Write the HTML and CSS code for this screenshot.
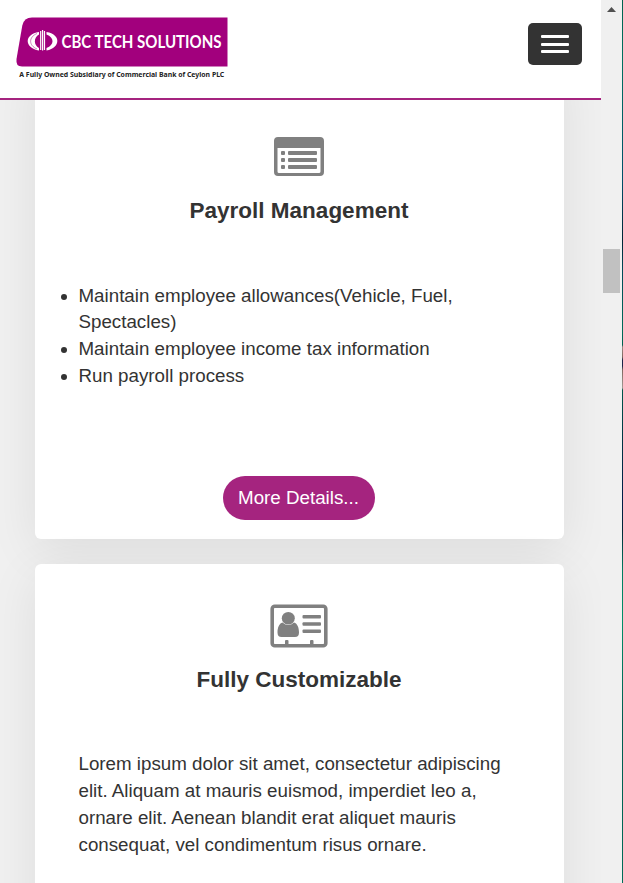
FILE: index.html
```html
<!DOCTYPE html>
<html lang="en">
<head>
<meta charset="utf-8">
<title>CBC Tech Solutions</title>
<link rel="stylesheet" href="styles.css">
</head>
<body>
<div class="window">
  <div class="page">
    <header class="header">
      <svg class="logo" width="216" height="66" viewBox="0 0 216 66">
        <path d="M16 1.500H211.500V50.500H6Q-.500 50.500 .500 43L6.300 9.500Q8 1.500 16 1.500Z" fill="#a2007d"/>
        <path d="M23 16C8 18 8 32 23 34.500V32C17.500 29 17.500 21.500 23 18.500Z" fill="#fff"/>
        <path d="M21 17.500C12.500 21 12.500 29.500 21 33" fill="none" stroke="#b94aa0" stroke-width=".7"/>
        <path d="M24.700 15V34M26.600 14V34.500M28.500 15V34" stroke="#fff" stroke-width="1.200"/>
        <path d="M30.500 16C45 18 45 32 30.500 34.500V32C38.500 29 38.500 21.500 30.500 18.500Z" fill="#fff"/>
        <text class="logo-name" x="45.500" y="32.300" textLength="160" lengthAdjust="spacingAndGlyphs">CBC TECH SOLUTIONS</text>
        <text class="logo-tag" x="3.300" y="61" textLength="205" lengthAdjust="spacingAndGlyphs">A Fully Owned Subsidiary of Commercial Bank of Ceylon PLC</text>
      </svg>
      <button class="menu" aria-label="Menu"><span></span><span></span><span></span></button>
    </header>
    <main class="cards">
      <section class="card card-first">
        <svg class="icon" width="52" height="41" viewBox="0 0 52 41">
          <path fill="#808080" fill-rule="evenodd" d="M5 1H47Q51 1 51 5V36Q51 40 47 40H5Q1 40 1 36V5Q1 1 5 1ZM4.500 12V35.500Q4.500 37 6 37H46Q47.500 37 47.500 35.500V12Z"/>
          <g fill="#808080">
            <rect x="8" y="15" width="4" height="4" rx="1"/><rect x="15" y="15" width="29" height="4" rx="1"/>
            <rect x="8" y="22" width="4" height="4" rx="1"/><rect x="15" y="22" width="29" height="4" rx="1"/>
            <rect x="8" y="29" width="4" height="4" rx="1"/><rect x="15" y="29" width="29" height="4" rx="1"/>
          </g>
        </svg>
        <h2>Payroll Management</h2>
        <ul>
          <li>Maintain employee allowances(Vehicle, Fuel, Spectacles)</li>
          <li>Maintain employee income tax information</li>
          <li>Run payroll process</li>
        </ul>
        <a class="button">More Details...</a>
      </section>
      <section class="card card-second">
        <svg class="icon" width="58" height="44" viewBox="0 0 58 44">
          <rect x="2.200" y="2.200" width="53.600" height="39.600" rx="2.500" fill="none" stroke="#808080" stroke-width="3.600"/>
          <g fill="#808080">
            <ellipse cx="18.300" cy="14.200" rx="6.500" ry="6.300"/>
            <path d="M12.500 18.500Q18.300 23.500 24 18.500C27.500 19.500 29 24 29 28.500Q29 33 25 33H11.500Q7.500 33 7.500 28.500C7.500 24 9 19.500 12.500 18.500Z"/>
            <rect x="32.500" y="11" width="18.500" height="3.500" rx="1"/>
            <rect x="32.500" y="18.300" width="18.500" height="3.500" rx="1"/>
            <rect x="32.500" y="25.500" width="18.500" height="3.500" rx="1"/>
            <rect x="15" y="36" width="3.500" height="6" rx="1"/>
            <rect x="40" y="36" width="3.500" height="6" rx="1"/>
          </g>
        </svg>
        <h2>Fully Customizable</h2>
        <p>Lorem ipsum dolor sit amet, consectetur adipiscing elit. Aliquam at mauris euismod, imperdiet leo a, ornare elit. Aenean blandit erat aliquet mauris consequat, vel condimentum risus ornare.</p>
      </section>
    </main>
  </div>
  <div class="scrollbar">
    <svg class="arrow" width="9" height="5" viewBox="0 0 9 5"><path d="M0 5L4.500 0L9 5Z" fill="#505050"/></svg>
    <div class="thumb"></div>
  </div>
  <div class="edge"></div>
</div>
</body>
</html>
```

FILE: styles.css
```css
* { box-sizing: border-box; }

body {
  margin: 0;
  overflow: hidden;
  font: 18.75px/26.79px "Liberation Sans", Arial, sans-serif;
  color: #333;
}

.window {
  display: flex;
  height: 883px;
  overflow: hidden;
  background: #f0f0f0;
}

.page {
  width: 601px;
  display: flex;
  flex-direction: column;
  overflow: hidden;
}

.header {
  flex: none;
  height: 100px;
  padding: 16px 19px 0 16px;
  display: flex;
  justify-content: space-between;
  background: #fff;
  border-bottom: 2px solid #a5247f;
}

.logo { overflow: visible; }

.logo-name {
  font: 700 16.500px Lato, sans-serif;
  fill: #fff;
}

.logo-tag {
  font: 700 7px "Noto Sans", sans-serif;
  fill: #222;
}

.menu {
  width: 54px;
  height: 42px;
  margin-top: 7px;
  padding: 0;
  display: flex;
  flex-direction: column;
  align-items: center;
  justify-content: center;
  gap: 4.500px;
  background: #333;
  border: 0;
  border-radius: 5px;
}

.menu span {
  width: 28px;
  height: 3px;
  border-radius: 1px;
  background: #fff;
}

.cards {
  flex: 1;
  min-height: 0;
  padding: 0 37px 0 35px;
  display: flex;
  flex-direction: column;
  gap: 25px;
  overflow: hidden;
}

.card {
  flex: none;
  display: flex;
  flex-direction: column;
  align-items: center;
  padding-right: 1px;
  background: #fff;
  border-radius: 6px;
  box-shadow: 0 12px 50px rgba(0, 0, 0, .08);
}

.card-first {
  height: 479px;
  margin-top: -40px;
  padding-top: 76px;
}

.card-second {
  height: 480px;
  padding-top: 40px;
}

.icon {
  display: block;
  margin-right: 1px;
}

h2 {
  margin: 20px 0 0;
  font-size: 22.500px;
  line-height: 27px;
  font-weight: 700;
}

.card-second h2 { margin-top: 18px; }

ul, p {
  align-self: stretch;
  margin: 58.500px 42px 0 43.500px;
}

ul { padding: 0; }

p { margin-top: 58.400px; }

.button {
  width: 152px;
  height: 44px;
  margin: 86.340px 1px 0 0;
  line-height: 43px;
  text-align: center;
  color: #fff;
  background: #a5247f;
  border-radius: 22px;
}

.scrollbar {
  width: 21px;
  padding: 7px 3px 0 2px;
  background: #f0f0f0;
}

.arrow {
  display: block;
  margin-left: 4px;
}

.thumb {
  width: 17px;
  height: 44px;
  margin-top: 237px;
  background: #c1c1c1;
}

.edge {
  width: 1px;
  background: linear-gradient(#00624f 0, #007060 60px, #00506a 180px, #002536 240px, #004a58 270px, #006b59 330px, #006050 345px, #9b8580 347px, #806961 357px, #1b2548 360px, #1b2548 366px, #806961 370px, #a39a94 388px, #00564b 390px, #003544 440px, #001d48 500px, #002838 530px, #007c60 570px, #009068 620px, #005c50 720px, #006c58 883px);
}
```
